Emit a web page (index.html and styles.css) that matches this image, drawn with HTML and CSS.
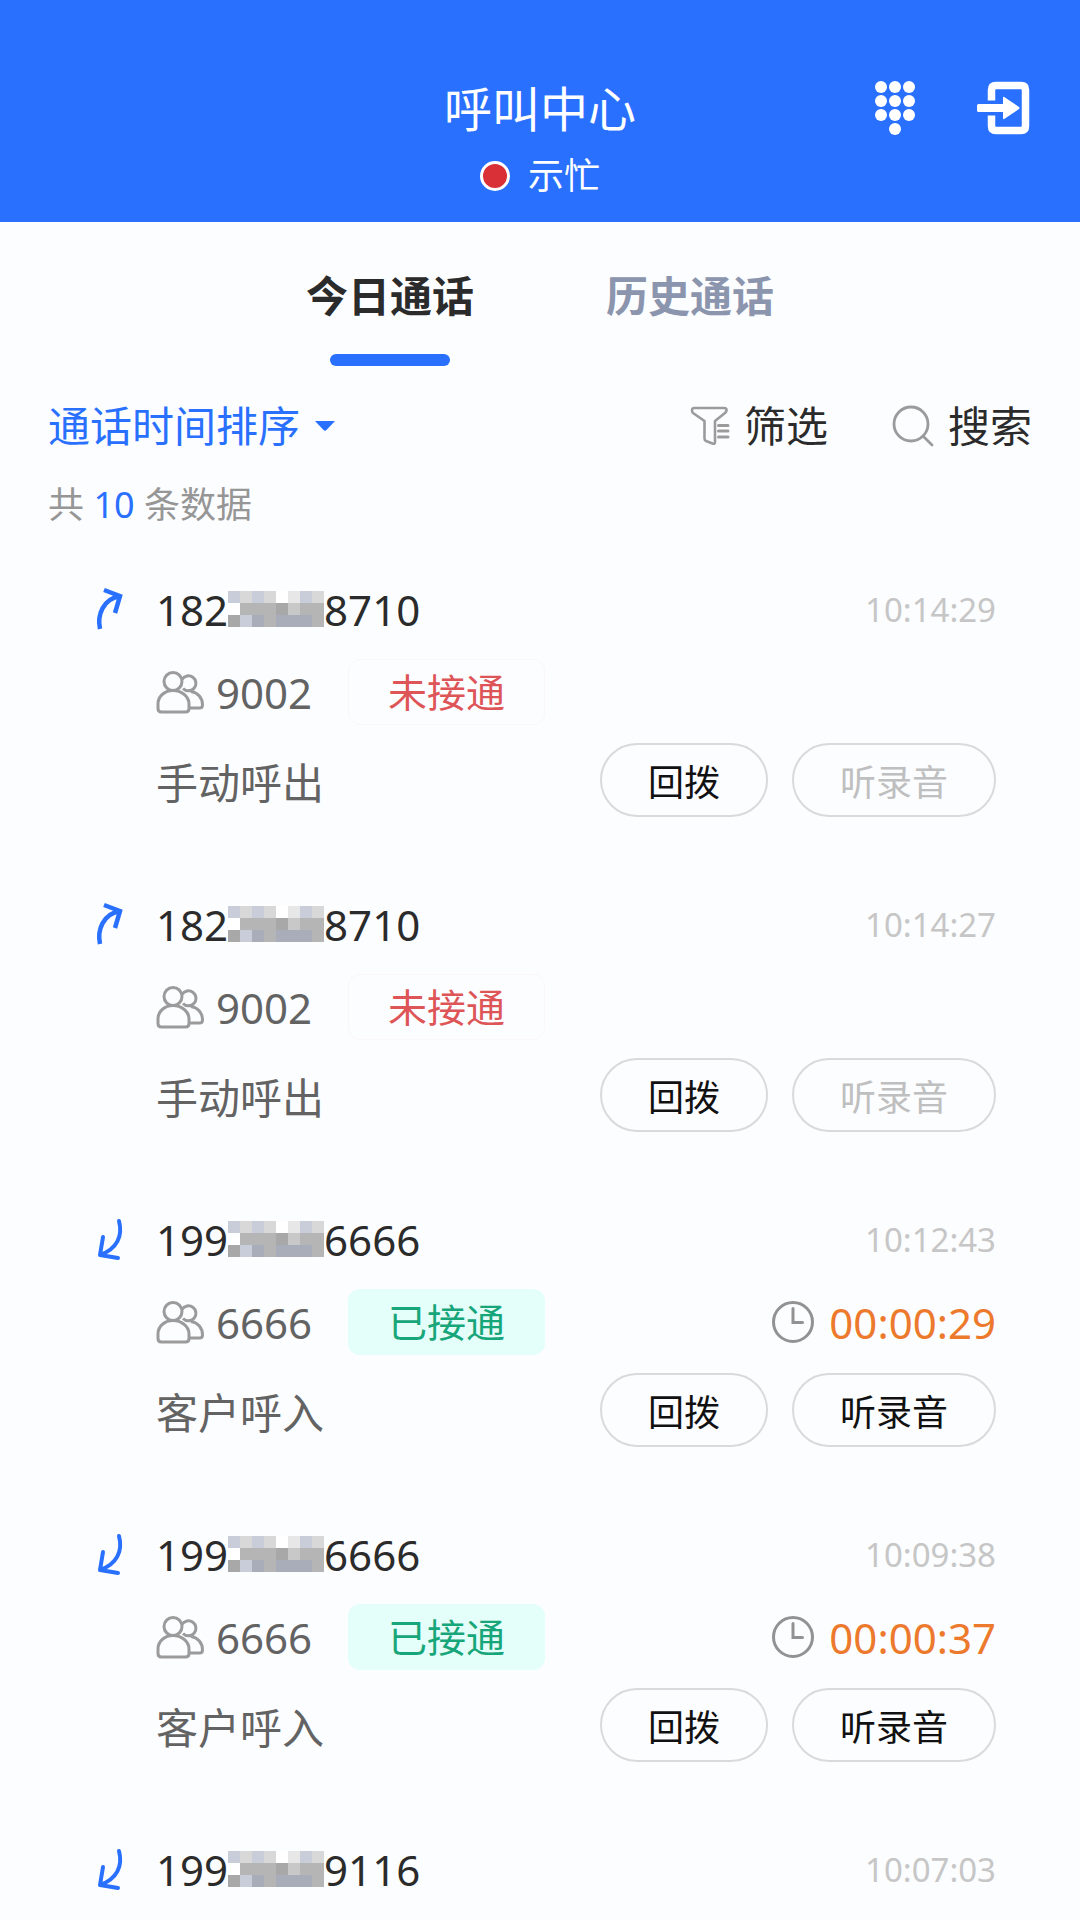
FILE: index.html
```html
<!DOCTYPE html>
<html lang="zh-CN">
<head>
<meta charset="utf-8">
<meta name="viewport" content="width=device-width, initial-scale=1">
<title>呼叫中心</title>
<link rel="stylesheet" href="styles.css">
</head>
<body>
<svg class="sprite" aria-hidden="true">
  <symbol id="out" viewBox="0 0 30 46"><path d="M5 43C2 29 8 13 25 10M9 4L25 10L20 27" fill="none" stroke="currentColor" stroke-width="4.500"/></symbol>
  <symbol id="in" viewBox="0 0 30 46"><path d="M24 5C28 20 22 33 5 39M8 21L5 39L23 42" fill="none" stroke="currentColor" stroke-width="4" stroke-linecap="round" stroke-linejoin="round"/></symbol>
  <symbol id="group" viewBox="0 0 50 43"><g fill="none" stroke="currentColor" stroke-width="3"><path d="M26 8.500A7.500 7.500 0 1 1 27 17.500M35 20.500C42 21.500 46.500 27 46.500 34Q46.500 37 43.500 37H34"/><circle cx="17" cy="10.500" r="9"/><path d="M2 37.500V33C2 25 9 19.500 17 19.500S33 25 33 33V37.500Q33 41 29.500 41H5.500Q2 41 2 37.500Z"/></g></symbol>
  <symbol id="clock" viewBox="0 0 42 42"><g fill="none" stroke="currentColor" stroke-width="3" stroke-linecap="round"><circle cx="21" cy="21" r="19.500"/><path d="M21 7.500V21.500H30.500"/></g></symbol>
  <symbol id="mosaic" viewBox="0 0 96 36"><g shape-rendering="crispEdges"><path fill="#b5b5b5" d="M0 0H96V36H0z"/><path fill="#fff" d="M48 0h12v12H48zM0 12h12v12H0z"/><path fill="#c9cdd9" d="M0 0h12v12H0zM24 0h12v12H24zM72 0h12v12H72zM12 24h12v12H12z"/><path fill="#d8d8d8" d="M12 0h12v12H12zM36 0h12v12H36zM84 0h12v12H84z"/><path fill="#e7e7e7" d="M60 0h12v12H60z"/><path fill="#c8c8c8" d="M60 12h12v12H60z"/><path fill="#a8a8a8" d="M48 12h12v12H48zM0 24h12v12H0z"/><path fill="#a8adb9" d="M24 24h12v12H24zM48 24h36v12H48z"/></g></symbol>
</svg>
<div class="app">
  <header class="header">
    <div class="heading">
      <h1 class="title">呼叫中心</h1>
      <p class="status"><span class="dot"></span>示忙</p>
    </div>
    <div class="actions">
      <button class="icon-button" type="button" aria-label="拨号盘">
        <svg width="42" height="56" viewBox="0 0 42 56" fill="#fff"><circle cx="7" cy="7" r="6"/><circle cx="21" cy="7" r="6"/><circle cx="35" cy="7" r="6"/><circle cx="7" cy="21" r="6"/><circle cx="21" cy="21" r="6"/><circle cx="35" cy="21" r="6"/><circle cx="7" cy="35" r="6"/><circle cx="21" cy="35" r="6"/><circle cx="35" cy="35" r="6"/><circle cx="21" cy="49" r="6"/></svg>
      </button>
      <button class="icon-button" type="button" aria-label="退出">
        <svg width="54" height="56" viewBox="0 0 54 56"><path d="M15.500 20.500V10Q15.500 5.500 20 5.500H45Q49.500 5.500 49.500 10V46Q49.500 50.500 45 50.500H20Q15.500 50.500 15.500 46V35.500" fill="none" stroke="#fff" stroke-width="7.500"/><path d="M2.500 24H27V18Q27 16 29 17.500L43 27Q44 28 43 29L29 38.500Q27 40 27 38V32H2.500Q1 32 1 30.500V25.500Q1 24 2.500 24Z" fill="#fff"/></svg>
      </button>
    </div>
  </header>

  <nav class="tabs" role="tablist">
    <button class="tab tab-active" type="button" role="tab" aria-selected="true">今日通话</button>
    <button class="tab" type="button" role="tab" aria-selected="false">历史通话</button>
  </nav>

  <div class="toolbar">
    <div class="sort">
      <select class="sort-select" aria-label="排序方式"><option>通话时间排序</option></select>
      <svg width="20" height="10" viewBox="0 0 20 10" aria-hidden="true"><path d="M0 0H20L11.500 9Q10 10.500 8.500 9Z" fill="currentColor"/></svg>
    </div>
    <div class="tools">
      <button class="tool" type="button">
        <svg width="40" height="40" viewBox="0 0 40 40" fill="none" stroke="#9b9b9b" stroke-width="2.600" stroke-linecap="round" stroke-linejoin="round"><path d="M4 2H34Q37 2 36.500 4.500Q36 6 35 7L25 15V36Q25 38.500 22.500 37.500L16 35Q14.500 34.500 14.500 32.500V15L3 7Q2 6 2 4.500Q2 2 4 2Z"/><path d="M28.500 19.500H38M28.500 25H38M28.500 31H38" stroke-width="3"/></svg>
        筛选
      </button>
      <button class="tool" type="button">
        <svg width="42" height="42" viewBox="0 0 42 42" fill="none" stroke="#9b9b9b" stroke-width="2.800" stroke-linecap="round"><circle cx="19" cy="19" r="17"/><path d="M31 31L40 40"/></svg>
        搜索
      </button>
    </div>
  </div>
  <p class="count">共 <span class="count-value">10</span> 条数据</p>

  <ul class="calls">
    <li class="call">
      <svg class="direction"><use href="#out"/></svg>
      <div class="line"><span class="phone">182<svg class="mask"><use href="#mosaic"/></svg>8710</span><time class="time">10:14:29</time></div>
      <div class="line details"><span class="agent"><svg class="group"><use href="#group"/></svg>9002</span><span class="tag tag-missed">未接通</span></div>
      <div class="line kind"><span>手动呼出</span><span class="buttons"><button class="pill" type="button">回拨</button><button class="pill" type="button" disabled>听录音</button></span></div>
    </li>
    <li class="call">
      <svg class="direction"><use href="#out"/></svg>
      <div class="line"><span class="phone">182<svg class="mask"><use href="#mosaic"/></svg>8710</span><time class="time">10:14:27</time></div>
      <div class="line details"><span class="agent"><svg class="group"><use href="#group"/></svg>9002</span><span class="tag tag-missed">未接通</span></div>
      <div class="line kind"><span>手动呼出</span><span class="buttons"><button class="pill" type="button">回拨</button><button class="pill" type="button" disabled>听录音</button></span></div>
    </li>
    <li class="call">
      <svg class="direction"><use href="#in"/></svg>
      <div class="line"><span class="phone">199<svg class="mask"><use href="#mosaic"/></svg>6666</span><time class="time">10:12:43</time></div>
      <div class="line details"><span class="agent"><svg class="group"><use href="#group"/></svg>6666</span><span class="tag tag-answered">已接通</span><span class="duration"><svg class="clock"><use href="#clock"/></svg>00:00:29</span></div>
      <div class="line kind"><span>客户呼入</span><span class="buttons"><button class="pill" type="button">回拨</button><button class="pill" type="button">听录音</button></span></div>
    </li>
    <li class="call">
      <svg class="direction"><use href="#in"/></svg>
      <div class="line"><span class="phone">199<svg class="mask"><use href="#mosaic"/></svg>6666</span><time class="time">10:09:38</time></div>
      <div class="line details"><span class="agent"><svg class="group"><use href="#group"/></svg>6666</span><span class="tag tag-answered">已接通</span><span class="duration"><svg class="clock"><use href="#clock"/></svg>00:00:37</span></div>
      <div class="line kind"><span>客户呼入</span><span class="buttons"><button class="pill" type="button">回拨</button><button class="pill" type="button">听录音</button></span></div>
    </li>
    <li class="call">
      <svg class="direction"><use href="#in"/></svg>
      <div class="line"><span class="phone">199<svg class="mask"><use href="#mosaic"/></svg>9116</span><time class="time">10:07:03</time></div>
    </li>
  </ul>
</div>
</body>
</html>
```
FILE: styles.css
```css
* { box-sizing: border-box; }

body {
  margin: 0;
  background: #fcfdff;
  color: #2b2b2b;
  font-family: "Noto Sans", "Noto Sans CJK SC", sans-serif;
  font-size: 42px;
}

button, select {
  padding: 0;
  border: 0;
  background: none;
  color: inherit;
  font: inherit;
}

svg { flex: none; }

.sprite { position: absolute; width: 0; height: 0; }

.app {
  display: flex;
  flex-direction: column;
  height: 100vh;
}

.header {
  display: grid;
  grid-template-columns: 1fr auto 1fr;
  padding: 76px 50px 22px;
  background: #2970ff;
  color: #fff;
}

.heading { grid-column: 2; text-align: center; }

.title {
  margin: 0 0 10px;
  font-size: 48px;
  font-weight: 400;
  line-height: 66px;
}

.status {
  display: flex;
  align-items: center;
  justify-content: center;
  gap: 18px;
  margin: 0;
  font-size: 36px;
  line-height: 48px;
}

.dot {
  width: 30px;
  height: 30px;
  border: 3px solid #fff;
  border-radius: 50%;
  background: #d92f36;
}

.actions {
  display: flex;
  align-items: center;
  justify-content: flex-end;
  gap: 60px;
  height: 64px;
}

.icon-button { display: flex; }

.tabs {
  display: grid;
  grid-template-columns: 300px 300px;
  justify-content: center;
  height: 144px;
}

.tab {
  display: flex;
  flex-direction: column;
  align-items: center;
  justify-content: space-between;
  padding-top: 44px;
  color: #8c95ae;
  font-weight: 700;
  line-height: 60px;
}

.tab-active { color: #2b2b2b; }

.tab-active::after {
  content: "";
  width: 120px;
  height: 12px;
  border-radius: 6px;
  background: #2970ff;
}

.toolbar {
  display: flex;
  align-items: center;
  justify-content: space-between;
  height: 72px;
  margin-top: 24px;
  padding: 0 48px;
}

.sort {
  display: flex;
  align-items: center;
  gap: 14px;
  color: #2970ff;
}

.sort-select { appearance: none; line-height: 60px; }

.tools { display: flex; gap: 64px; }

.tool {
  display: flex;
  align-items: center;
  gap: 14px;
  line-height: 60px;
}

.count {
  margin: 16px 48px;
  color: #969696;
  font-size: 36px;
  line-height: 54px;
}

.count-value { color: #2970ff; }

.calls {
  flex: 1;
  min-height: 0;
  margin: 0;
  padding: 0;
  overflow-y: auto;
  list-style: none;
  scrollbar-width: none;
}

.call {
  display: grid;
  grid-template-columns: 30px 1fr;
  grid-template-rows: 64px 66px 74px;
  gap: 18px 31px;
  padding: 29px 84px 46px 95px;
}

.direction {
  width: 30px;
  height: 46px;
  align-self: center;
  color: #2970ff;
}

.line {
  grid-column: 2;
  display: flex;
  align-items: center;
  justify-content: space-between;
}

.phone { display: flex; align-items: center; }

.mask { width: 96px; height: 36px; }

.time { color: #c6c6c6; font-size: 33px; }

.details { justify-content: flex-start; color: #636363; }

.agent { display: flex; align-items: center; gap: 10px; }

.group { width: 50px; height: 43px; color: #9b9b9b; }

.tag {
  margin-left: 36px;
  padding: 0 39px;
  border: 1px solid transparent;
  border-radius: 12px;
  font-size: 39px;
  line-height: 64px;
}

.tag-missed { border-color: #fbf7f9; color: #de5558; }

.tag-answered { background: #e4fefa; color: #17a679; }

.duration {
  display: flex;
  align-items: center;
  gap: 15px;
  margin-left: auto;
  color: #ec792c;
}

.clock { width: 42px; height: 42px; color: #929292; }

.kind { color: #636363; }

.buttons { display: flex; gap: 24px; }

.pill {
  height: 74px;
  padding: 0 46px;
  border: 2px solid #dadada;
  border-radius: 37px;
  color: #111;
  font-size: 36px;
}

.pill:disabled { color: #bfbfbf; }
```
